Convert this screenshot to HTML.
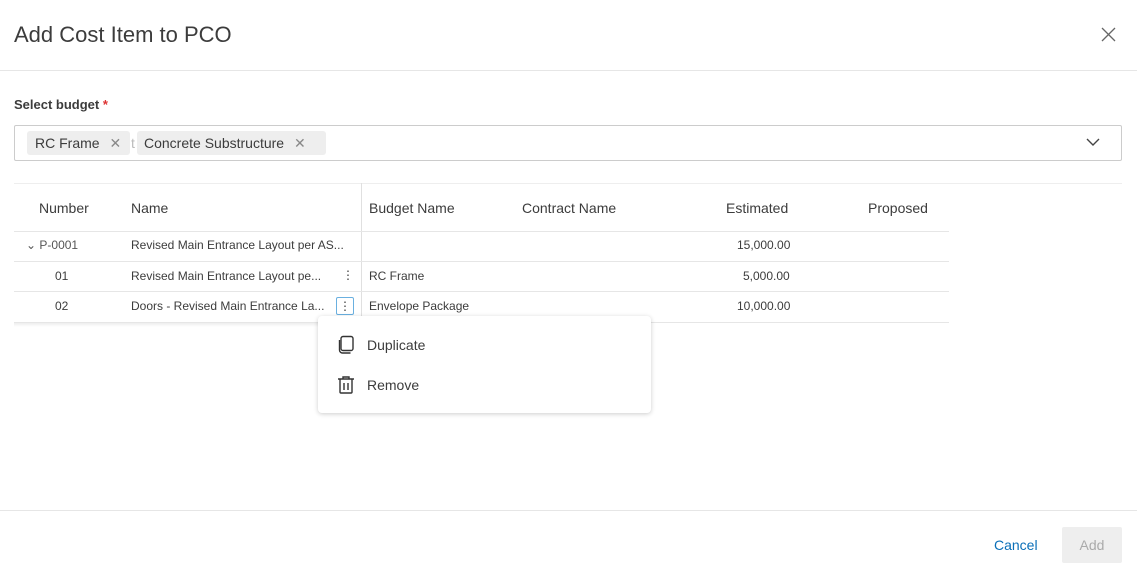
<!DOCTYPE html>
<html><head><style>
*{box-sizing:border-box;margin:0;padding:0}
body{width:1137px;height:575px;background:#fff;font-family:"Liberation Sans",sans-serif;color:#3c3c3c;position:relative;overflow:hidden}
.a{position:absolute;white-space:nowrap}
.hl{position:absolute;height:1px;background:#e6e6e6}
.t{font-size:12px;color:#3c3c3c}
.h{font-size:14px;color:#3c3c3c}
</style></head><body>
<div class="a" style="left:14px;top:22px;font-size:22px;color:#3c3c3c">Add Cost Item to PCO</div>
<svg class="a" style="left:1101px;top:27px" width="15" height="15"><path d="M1 1L14 14M14 1L1 14" stroke="#666" stroke-width="1.3"/></svg>
<div class="hl" style="left:0;top:70px;width:1137px"></div>
<div class="a" style="left:14px;top:97px;font-size:13px;font-weight:bold;color:#3c3c3c">Select budget <span style="color:#d33">*</span></div>
<div class="a" style="left:14px;top:125px;width:1108px;height:36px;border:1px solid #ccc;border-radius:2px"></div>
<div class="a" style="left:27px;top:131px;width:103px;height:24px;background:#eee;border-radius:3px;font-size:14px;padding:4px 8px">RC Frame <span style="color:#888;margin-left:6px">✕</span></div>
<div class="a" style="left:131px;top:135px;font-size:14px;color:#bbb">t</div>
<div class="a" style="left:137px;top:131px;width:189px;height:24px;background:#eee;border-radius:3px;font-size:14px;padding:4px 7px">Concrete Substructure <span style="color:#888;margin-left:6px">✕</span></div>
<svg class="a" style="left:1086px;top:138px" width="14" height="9"><path d="M1 1L7 7L13 1" stroke="#444" stroke-width="1.4" fill="none"/></svg>
<div class="hl" style="left:14px;top:183px;width:1108px;background:#eee"></div>
<div class="a" style="left:361px;top:183px;width:1px;height:140px;background:#e0e0e0"></div>
<div class="a h" style="left:39px;top:200px">Number</div>
<div class="a h" style="left:131px;top:200px">Name</div>
<div class="a h" style="left:369px;top:200px">Budget Name</div>
<div class="a h" style="left:522px;top:200px">Contract Name</div>
<div class="a h" style="left:726px;top:200px">Estimated</div>
<div class="a h" style="left:868px;top:200px">Proposed</div>
<div class="hl" style="left:14px;top:231px;width:935px"></div>
<div class="a t" style="left:26px;top:238px;color:#555">⌄ P-0001</div>
<div class="a t" style="left:131px;top:238px">Revised Main Entrance Layout per AS...</div>
<div class="a t" style="left:737px;top:238px">15,000.00</div>
<div class="hl" style="left:14px;top:261px;width:935px"></div>
<div class="a t" style="left:55px;top:269px">01</div>
<div class="a t" style="left:131px;top:269px">Revised Main Entrance Layout pe...</div>
<div class="a t" style="left:342px;top:268px">⋮</div>
<div class="a t" style="left:369px;top:269px">RC Frame</div>
<div class="a t" style="left:743px;top:269px">5,000.00</div>
<div class="hl" style="left:14px;top:291px;width:935px"></div>
<div class="a t" style="left:55px;top:299px">02</div>
<div class="a t" style="left:131px;top:299px">Doors - Revised Main Entrance La...</div>
<div class="a" style="left:336px;top:297px;width:18px;height:18px;border:1px solid #6ab0e0;border-radius:2px;font-size:12px;text-align:center;line-height:16px">⋮</div>
<div class="a t" style="left:369px;top:299px">Envelope Package</div>
<div class="a t" style="left:737px;top:299px">10,000.00</div>
<div class="hl" style="left:14px;top:322px;width:935px"></div>
<div class="a" style="left:14px;top:323px;width:347px;height:4px;background:linear-gradient(#eee,#fff)"></div>
<div class="a" style="left:318px;top:316px;width:333px;height:97px;background:#fff;border-radius:4px;box-shadow:0 1px 5px rgba(0,0,0,.2)"></div>
<svg class="a" style="left:336px;top:335px" width="20" height="20"><rect x="5" y="1.5" width="12" height="14" rx="2" stroke="#333" stroke-width="1.4" fill="none"/><path d="M3.5 5v10a3 3 0 0 0 3 3h8" stroke="#333" stroke-width="1.4" fill="none"/></svg>
<div class="a" style="left:367px;top:337px;font-size:14px">Duplicate</div>
<svg class="a" style="left:336px;top:375px" width="20" height="20"><path d="M2 4h16M7 4V2h6v2M4 4v13a1 1 0 0 0 1 1h10a1 1 0 0 0 1-1V4M8 8v7M12 8v7" stroke="#333" stroke-width="1.4" fill="none"/></svg>
<div class="a" style="left:367px;top:377px;font-size:14px">Remove</div>
<div class="hl" style="left:0;top:510px;width:1137px"></div>
<div class="a" style="left:994px;top:537px;font-size:14px;color:#0a6fb8">Cancel</div>
<div class="a" style="left:1062px;top:527px;width:60px;height:36px;background:#eee;border-radius:2px;font-size:14px;color:#aaa;text-align:center;line-height:36px">Add</div>
</body></html>
